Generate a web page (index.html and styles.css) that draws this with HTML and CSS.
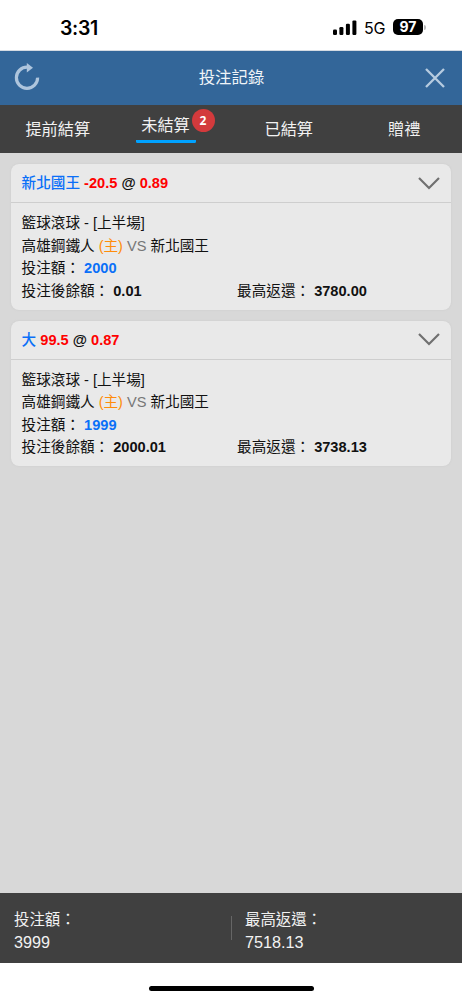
FILE: index.html
```html
<!DOCTYPE html>
<html lang="zh-Hant">
<head>
<meta charset="utf-8">
<meta name="viewport" content="width=device-width, initial-scale=1">
<title>投注記錄</title>
<link rel="stylesheet" href="styles.css">
</head>
<body>
<div class="screen">
  <div class="status">
    <span class="clock">3:31</span>
    <div class="status-right">
      <svg class="signal" width="24" height="16" viewBox="0 0 24 16"><rect x="0" y="9.6" width="4" height="5.4" rx="1.2"/><rect x="6.4" y="7" width="4" height="8" rx="1.2"/><rect x="12.9" y="3.8" width="4" height="11.2" rx="1.2"/><rect x="19.4" y="0.4" width="4" height="14.6" rx="1.2"/></svg>
      <span class="net">5G</span>
      <span class="battery">97</span>
      <span class="battery-tip"></span>
    </div>
  </div>
  <header class="header">
    <svg class="refresh" width="26" height="28" viewBox="0 0 26 28"><path d="M13.5 4.2A10.6 10.6 0 1 0 23.6 14.6" fill="none" stroke="#aec5dd" stroke-width="3.2"/><path d="M12.8 0L19 4.7L12.8 9.4Z" fill="#aec5dd"/></svg>
    <h1 class="title">投注記錄</h1>
    <svg class="close" width="20" height="20" viewBox="0 0 20 20"><path d="M1 1L19 19M19 1L1 19" fill="none" stroke="#b7cce0" stroke-width="2.3"/></svg>
  </header>
  <nav class="tabs">
    <span class="tab">提前結算</span>
    <span class="tab tab-active"><span class="tab-label">未結算</span><span class="badge">2</span></span>
    <span class="tab">已結算</span>
    <span class="tab">贈禮</span>
  </nav>
  <main class="list">
    <section class="card">
      <div class="card-head"><div class="pick"><span class="team">新北國王</span> <b class="red">-20.5</b> <b>@</b> <b class="red">0.89</b></div>
        <svg class="chevron" width="22" height="13" viewBox="0 0 22 13"><path d="M1 1L11 11L21 1" fill="none" stroke="#707070" stroke-width="2.2"/></svg></div>
      <div class="card-body">
        <div class="line">籃球滾球 - [上半場]</div>
        <div class="line">高雄鋼鐵人 <span class="home">(主)</span> <span class="versus">VS</span> 新北國王</div>
        <div class="line">投注額： <b class="stake">2000</b></div>
        <div class="line split"><span>投注後餘額： <b>0.01</b></span><span>最高返還： <b>3780.00</b></span></div>
      </div>
    </section>
    <section class="card">
      <div class="card-head"><div class="pick"><span class="team">大</span> <b class="red">99.5</b> <b>@</b> <b class="red">0.87</b></div>
        <svg class="chevron" width="22" height="13" viewBox="0 0 22 13"><path d="M1 1L11 11L21 1" fill="none" stroke="#707070" stroke-width="2.2"/></svg></div>
      <div class="card-body">
        <div class="line">籃球滾球 - [上半場]</div>
        <div class="line">高雄鋼鐵人 <span class="home">(主)</span> <span class="versus">VS</span> 新北國王</div>
        <div class="line">投注額： <b class="stake">1999</b></div>
        <div class="line split"><span>投注後餘額： <b>2000.01</b></span><span>最高返還： <b>3738.13</b></span></div>
      </div>
    </section>
  </main>
  <footer class="totals">
    <div class="total"><span class="total-label">投注額：</span><span class="total-value">3999</span></div>
    <div class="divider"></div>
    <div class="total"><span class="total-label">最高返還：</span><span class="total-value">7518.13</span></div>
  </footer>
  <div class="home-area"><div class="home-bar"></div></div>
</div>
</body>
</html>
```
FILE: styles.css
```css
* { box-sizing: border-box; }
body {
  margin: 0;
  background: #fff;
  color: #111;
  font-family: "Liberation Sans", "Noto Sans CJK TC", sans-serif;
}
svg { display: block; flex: none; }
.screen { width: 462px; height: 1000px; display: flex; flex-direction: column; overflow: hidden; }

.status {
  height: 51px;
  flex: none;
  display: flex;
  justify-content: space-between;
  align-items: flex-start;
  padding: 15px 36px 0 60px;
  border-bottom: 1px solid #d5dbe2;
  color: #000;
}
.clock { font: 600 19.5px/26px Inter, sans-serif; letter-spacing: -0.35px; }
.status-right { display: flex; align-items: center; height: 25px; }
.signal { margin-top: 0; }
.net { width: 22px; margin-left: 7px; padding-top: 1px; font: 400 16px/20px Inter, sans-serif; letter-spacing: -0.3px; }
.battery {
  width: 30px;
  height: 16px;
  margin-left: 7px;
  margin-top: -1px;
  border-radius: 5px;
  background: #000;
  color: #fff;
  font: 700 14px/16px Inter, sans-serif;
  text-align: center;
}
.battery-tip { width: 2px; height: 5px; margin-left: 1px; border-radius: 0 2px 2px 0; background: #bbb; }

.header {
  height: 54px;
  flex: none;
  display: flex;
  align-items: center;
  justify-content: space-between;
  padding: 0 17px 0 14px;
  background: #336699;
}
.refresh { margin-top: -2px; }
.title { margin: 0 2px 2px 0; color: #f0f4f8; font-size: 16.4px; font-weight: 400; line-height: 24px; }

.tabs {
  height: 48px;
  flex: none;
  display: grid;
  grid-template-columns: repeat(4, 1fr);
  background: #404040;
  color: #f2f2f2;
  font-size: 16.2px;
}
.tab { display: flex; align-items: center; justify-content: center; padding-bottom: 2px; }
.tab-active { align-items: flex-start; justify-content: flex-start; padding: 0 0 0 20px; }
.tab-label {
  width: 60px;
  height: 38px;
  padding-top: 8px;
  border-bottom: 3px solid #00a2ff;
  border-radius: 1.5px;
  line-height: 24px;
  text-align: center;
}
.badge {
  width: 23px;
  height: 23px;
  margin: 4px 0 0 -4px;
  border-radius: 50%;
  background: #d33a3c;
  color: #fff;
  font: 700 12px/23px "Open Sans", sans-serif;
  text-align: center;
}

.list {
  flex: 1;
  display: flex;
  flex-direction: column;
  gap: 11px;
  padding: 11px 11px 0;
  background: #d8d8d8;
}
.card {
  height: 145.5px;
  border-radius: 8px;
  background: #e9e9e9;
  box-shadow: 0 0 2px #c8c8c8;
  font-size: 14.6px;
}
.card-head {
  height: 39px;
  display: flex;
  align-items: center;
  justify-content: space-between;
  padding: 0 11px 0 10.6px;
  border-bottom: 1px solid #cecece;
}
.pick { padding-bottom: 3px; }
.team { color: #0b70f8; font-weight: 500; }
.red { color: #f00; }
.card-body { padding: 9px 11px 0 10.6px; }
.line { height: 22.67px; line-height: 22.67px; white-space: pre; }
.home { color: #ff8c0a; }
.versus { color: #777; }
.stake { color: #0b70f8; }
.split { display: grid; grid-template-columns: 215.5px 1fr; }

.totals {
  height: 70px;
  flex: none;
  display: grid;
  grid-template-columns: 217px 1px 1fr;
  align-items: center;
  padding-left: 14px;
  background: #404040;
  color: #f2f2f2;
}
.total { display: flex; flex-direction: column; padding-top: 5px; }
.divider { height: 24px; background: #666; }
.divider + .total { padding-left: 13px; }
.total-label { font-size: 15.4px; line-height: 22px; }
.total-value { font-size: 16.2px; line-height: 22px; }

.home-area { height: 37px; flex: none; display: flex; justify-content: center; padding-top: 23px; background: #fff; }
.home-bar { width: 165px; height: 5px; border-radius: 3px; background: #000; }
```
